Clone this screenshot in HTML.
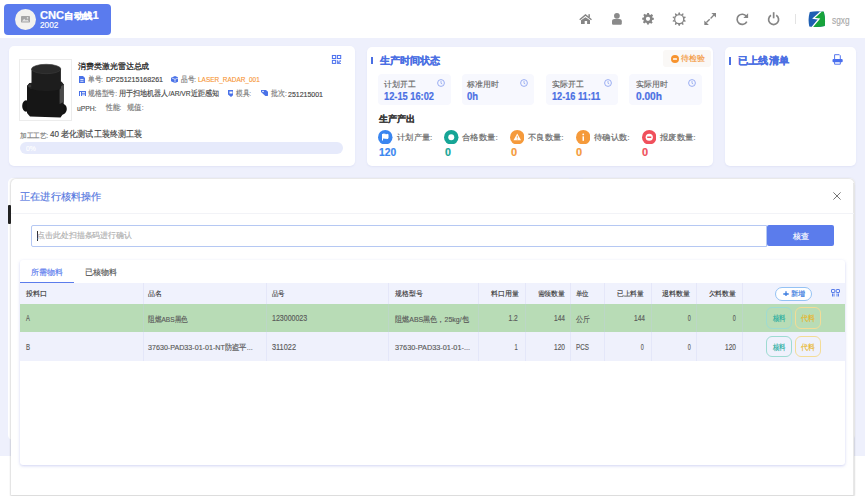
<!DOCTYPE html>
<html><head><meta charset="utf-8">
<style>
*{margin:0;padding:0;box-sizing:border-box}
html,body{width:865px;height:496px;overflow:hidden}
body{position:relative;background:#eef0fc;font-family:"Liberation Sans",sans-serif;color:#333}
.abs{position:absolute}
.txt{white-space:nowrap;line-height:1;-webkit-text-stroke:0.15px currentColor}
</style></head><body>
<div class="abs" style="left:0.00px;top:0.00px;width:865.00px;height:38.00px;background:#fff;"></div>
<div class="abs" style="left:4.00px;top:4.00px;width:107.00px;height:31.00px;background:#5a7bee;border-radius:4px"></div>
<div class="abs" style="left:15.00px;top:9.00px;width:21.00px;height:21.00px;background:#f3f2ef;border-radius:50%"></div>
<svg class="abs" style="left:21.00px;top:16.30px" width="9" height="6.5" viewBox="0 0 10 7"><rect width="10" height="7" rx="0.8" fill="#a5a5a5"/><path d="M1 6 L3.5 3 L5.5 5 L7 3.8 L9 6Z" fill="#e2e2e2"/><circle cx="7.3" cy="2" r="0.9" fill="#e2e2e2"/></svg>
<div id="t0" class="abs txt" style="top:9.84px;font-size:9.20px;color:#fff;font-weight:bold;-webkit-text-stroke:0.2px currentColor;left:40.00px;transform:scaleX(1.0529);transform-origin:left;"><span style="font-size:10.6px">CNC</span>自动线<span style="font-size:10.6px">1</span></div>
<div id="t1" class="abs txt" style="top:21.03px;font-size:9.00px;color:#fff;left:40.38px;transform:scaleX(0.9143);transform-origin:left;">2002</div>
<svg class="abs" style="left:575px;top:10px" width="25" height="18" viewBox="0 0 25 18"><path d="M4.7 9.7 L10.5 4.9 L16.5 9.7" fill="none" stroke="#858585" stroke-width="1.4"/><rect x="13.4" y="4.2" width="1.5" height="3" fill="#858585"/><path d="M6 10.2 L10.5 7.2 L15 10.2 V13.9 H12.1 V11 H9.7 V13.9 H6 Z" fill="#858585"/></svg>
<svg class="abs" style="left:605px;top:10px" width="25" height="18" viewBox="0 0 25 18"><circle cx="11.9" cy="5.8" r="2.9" fill="#8a8a8a"/><path d="M7 11.3 C7 9.8 8 9 9.4 9 H14.4 C15.8 9 16.8 9.8 16.8 11.3 V13.4 C16.8 14.3 16.2 14.8 15.3 14.8 H8.5 C7.6 14.8 7 14.3 7 13.4 Z" fill="#8a8a8a"/></svg>
<svg class="abs" style="left:642px;top:13.1px" width="12" height="11.6" viewBox="0 0 24 24"><path fill="#858585" d="M10 0h4l.6 3.2a9 9 0 0 1 2.4 1l2.7-1.9 2.8 2.8-1.9 2.7a9 9 0 0 1 1 2.4L24 10v4l-3.2.6a9 9 0 0 1-1 2.4l1.9 2.7-2.8 2.8-2.7-1.9a9 9 0 0 1-2.4 1L14 24h-4l-.6-3.2a9 9 0 0 1-2.4-1l-2.7 1.9-2.8-2.8 1.9-2.7a9 9 0 0 1-1-2.4L0 14v-4l3.2-.6a9 9 0 0 1 1-2.4L2.3 4.3l2.8-2.8L7.8 3.4a9 9 0 0 1 2.4-1zM12 7.6a4.4 4.4 0 1 0 0 8.8 4.4 4.4 0 0 0 0-8.8z"/></svg>
<svg class="abs" style="left:665px;top:8px" width="25" height="22" viewBox="0 0 25 22"><circle cx="14.2" cy="11.1" r="4.55" fill="none" stroke="#858585" stroke-width="1.3"/><path d="M15.45 6.20 L14.55 4.20 L13.85 4.20 L12.95 6.20Z M18.09 7.87 L18.54 5.72 L17.97 5.31 L16.07 6.40Z M19.25 10.77 L20.87 9.30 L20.65 8.63 L18.47 8.40Z M18.47 13.80 L20.65 13.57 L20.87 12.90 L19.25 11.43Z M16.07 15.80 L17.97 16.89 L18.54 16.48 L18.09 14.33Z M12.95 16.00 L13.85 18.00 L14.55 18.00 L15.45 16.00Z M10.31 14.33 L9.86 16.48 L10.43 16.89 L12.33 15.80Z M9.15 11.43 L7.53 12.90 L7.75 13.57 L9.93 13.80Z M9.93 8.40 L7.75 8.63 L7.53 9.30 L9.15 10.77Z M12.33 6.40 L10.43 5.31 L9.86 5.72 L10.31 7.87Z" fill="#858585"/></svg>
<svg class="abs" style="left:700px;top:8px" width="20" height="22" viewBox="0 0 20 22"><g fill="#858585"><path d="M16 5 V9.6 L11.4 5 Z"/><path d="M4.3 17 V12.4 L8.9 17 Z"/></g><g stroke="#858585" stroke-width="1.35"><path d="M13.9 7.1 L10.6 10.4"/><path d="M9.7 11.3 L6.4 14.6"/></g></svg>
<svg class="abs" style="left:730px;top:8px" width="22" height="22" viewBox="0 0 22 22"><path d="M16.4 8.4 A5.1 5.1 0 1 0 16.8 13.6" fill="none" stroke="#858585" stroke-width="1.65"/><path d="M18.1 5.3 V10 H13.4 Z" fill="#858585"/></svg>
<svg class="abs" style="left:762px;top:8px" width="22" height="22" viewBox="0 0 22 22"><path d="M9 7.3 A5 5 0 1 0 14.2 7.3" fill="none" stroke="#858585" stroke-width="1.7"/><rect x="10.8" y="4.2" width="1.7" height="6.1" fill="#858585"/></svg>
<div class="abs" style="left:795.30px;top:13.70px;width:1.00px;height:10.30px;background:#e3e3e3;"></div>
<svg class="abs" style="left:808.20px;top:10.90px" width="17.4" height="16.3" viewBox="0 17.4 16.3"><defs><clipPath id="lg"><path d="M1.8 0.9 Q8.7 -0.3 15.8 0.7 Q17.7 8 16.7 15 Q8.7 16.6 1.3 15.4 Q-0.4 8 1.8 0.9Z"/></clipPath></defs><g clip-path="url(#lg)"><rect width="17.4" height="16.3" fill="#1e5fb3"/><path d="M13.6 0 H18 V17 H3.6 L10.9 8.1 L5.8 7.3 Z" fill="#17a33b"/><path d="M13.8 -0.2 L5.6 7.3 L11 8 L3.6 16.8" fill="none" stroke="#fff" stroke-width="1.3" stroke-linejoin="miter"/></g></svg>
<div id="t2" class="abs txt" style="top:15.56px;font-size:10.00px;color:#a8a8a8;left:832.24px;transform:scaleX(0.8282);transform-origin:left;">sgxg</div>
<div class="abs" style="left:9.00px;top:46.00px;width:346.00px;height:120.00px;background:#fff;border-radius:5px;box-shadow:0 1px 2px rgba(110,120,200,.10)"></div>
<div class="abs" style="left:367.00px;top:47.00px;width:345.60px;height:119.00px;background:#fff;border-radius:5px;box-shadow:0 1px 2px rgba(110,120,200,.10)"></div>
<div class="abs" style="left:725.00px;top:47.00px;width:131.30px;height:119.00px;background:#fff;border-radius:5px;box-shadow:0 1px 2px rgba(110,120,200,.10)"></div>
<div class="abs" style="left:19.40px;top:58.50px;width:52.30px;height:62.90px;background:#fff;border:1px solid #ececec"></div>
<svg class="abs" style="left:20.50px;top:59.50px" width="51" height="61" viewBox="0 51 61"><ellipse cx="5" cy="46" rx="3.8" ry="5.8" fill="#111"/>
 <ellipse cx="40.8" cy="49" rx="5" ry="5.6" fill="#111"/>
 <path d="M6 26 L8.5 23 L40.5 21.8 L42.7 24.5 V53 L39.5 57.6 L9 56.5 L6 53 Z" fill="#161616"/>
 <path d="M38.6 22.5 L42.7 24.5 V42 L38.6 44 Z" fill="#4a4a4a"/>
 <path d="M6 26 L8.5 23 L40.5 21.8 L42.7 24.5 L38 28 L9.5 29 Z" fill="#252525"/>
 <ellipse cx="8.8" cy="26" rx="1.7" ry="1.2" fill="#3a3a3a"/><ellipse cx="33" cy="27.5" rx="1.7" ry="1.2" fill="#3a3a3a"/>
 <path d="M10.5 9 V28 C10.5 32 39.9 32 39.9 28 V9 Z" fill="#1d1d1d"/>
 <ellipse cx="25.2" cy="9" rx="14.7" ry="4.7" fill="#2a2a2a" stroke="#3c3c3c" stroke-width="0.6"/></svg>
<div id="t3" class="abs txt" style="top:63.18px;font-size:8.00px;color:#222;font-weight:500;-webkit-text-stroke:0.25px #222;left:77.76px;transform:scaleX(0.9921);transform-origin:left;">消费类激光雷达总成</div>
<svg class="abs" style="left:78.60px;top:76.30px" width="6.5" height="6.7" viewBox="0 6 7"><path d="M0 0H4L6 2V7H0Z" fill="#4a72e8"/><rect x="1.3" y="3.2" width="3.2" height="0.8" fill="#fff"/><rect x="1.3" y="4.8" width="3.2" height="0.8" fill="#fff"/></svg>
<div id="t4" class="abs txt" style="top:75.78px;font-size:7.50px;color:#777;left:87.81px;transform:scaleX(0.8260);transform-origin:left;">单号:</div>
<div id="t5" class="abs txt" style="top:76.38px;font-size:7.50px;color:#444;left:105.76px;transform:scaleX(0.9424);transform-origin:left;">DP251215168261</div>
<svg class="abs" style="left:171.20px;top:76.20px" width="7.3" height="7" viewBox="0 8 7"><path d="M4 0L8 1.7V5.3L4 7L0 5.3V1.7Z" fill="#4a72e8"/><path d="M0.8 2L4 3.3L7.2 2M4 3.3V6.5" stroke="#fff" stroke-width="0.7" fill="none"/></svg>
<div id="t6" class="abs txt" style="top:75.78px;font-size:7.50px;color:#777;left:181.00px;transform:scaleX(0.8277);transform-origin:left;">品号:</div>
<div id="t7" class="abs txt" style="top:76.38px;font-size:7.50px;color:#f7983a;left:198.05px;transform:scaleX(0.8607);transform-origin:left;">LASER_RADAR_001</div>
<svg class="abs" style="left:78.60px;top:90.70px" width="7" height="5.3" viewBox="0 7 6"><rect width="7" height="6" fill="#4a72e8"/><rect x="1" y="1" width="1" height="4" fill="#fff"/><rect x="3" y="1.2" width="3" height="0.8" fill="#fff"/><rect x="3" y="2.7" width="3" height="0.8" fill="#fff"/><rect x="3" y="4.2" width="3" height="0.8" fill="#fff"/></svg>
<div id="t8" class="abs txt" style="top:90.16px;font-size:7.50px;color:#777;left:87.81px;transform:scaleX(0.8508);transform-origin:left;">规格型号:</div>
<div id="t9" class="abs txt" style="top:90.16px;font-size:7.50px;color:#444;left:118.76px;transform:scaleX(0.8832);transform-origin:left;">用于扫地机器人/AR/VR近距感知</div>
<svg class="abs" style="left:227.80px;top:90.40px" width="5.7" height="6.3" viewBox="0 6 7"><path d="M0 0H6V4.5L3 7L0 4.5Z" fill="#4a72e8"/><rect x="1.5" y="1.5" width="3" height="2" fill="#fff"/></svg>
<div id="t10" class="abs txt" style="top:90.16px;font-size:7.50px;color:#777;left:236.43px;transform:scaleX(0.8342);transform-origin:left;">模具:</div>
<svg class="abs" style="left:260.90px;top:90.40px" width="7" height="5.6" viewBox="0 9 7"><path d="M0 0H5L9 3.5L5.5 7L0 2Z" fill="#4a72e8"/><circle cx="2" cy="1.5" r="0.8" fill="#fff"/></svg>
<div id="t11" class="abs txt" style="top:90.16px;font-size:7.50px;color:#777;left:270.76px;transform:scaleX(0.8720);transform-origin:left;">批次:</div>
<div id="t12" class="abs txt" style="top:90.76px;font-size:7.50px;color:#444;left:287.81px;transform:scaleX(0.9291);transform-origin:left;">251215001</div>
<div id="t13" class="abs txt" style="top:104.34px;font-size:7.50px;color:#777;left:105.85px;transform:scaleX(0.8386);transform-origin:left;">性能:</div>
<div id="t14" class="abs txt" style="top:104.94px;font-size:7.50px;color:#555;left:77.43px;transform:scaleX(0.8973);transform-origin:left;">uPPH:</div>
<div id="t15" class="abs txt" style="top:104.34px;font-size:7.50px;color:#777;left:127.43px;transform:scaleX(0.9194);transform-origin:left;">规值:</div>
<svg class="abs" style="left:325.00px;top:50.00px" width="25" height="20" viewBox="0 25 20"><g fill="none" stroke="#4f73ee" stroke-width="1.05"><rect x="7.4" y="5.5" width="3.3" height="3"/><rect x="12.4" y="5.5" width="3.3" height="3"/><rect x="7.4" y="10.4" width="3.3" height="3"/></g><path d="M12 10.2 H13.2 V11.4 H14.4 V10.2 H16 V11.8 H14.8 V13 H16 V14 H12Z" fill="#4f73ee" opacity="0.85"/></svg>
<div id="t16" class="abs txt" style="top:130.49px;font-size:9.00px;color:#444;left:50.00px;transform:scaleX(0.8973);transform-origin:left;">40 老化测试工装终测工装</div>
<div id="t17" class="abs txt" style="top:132.18px;font-size:7.00px;color:#777;left:19.62px;transform:scaleX(0.9414);transform-origin:left;">加工工艺:</div>
<div class="abs" style="left:19.90px;top:141.50px;width:323.60px;height:12.20px;background:#e6eafb;border-radius:6px"></div>
<div id="t18" class="abs txt" style="top:144.64px;font-size:7.50px;color:#fff;left:25.62px;transform:scaleX(0.9091);transform-origin:left;">0%</div>
<div class="abs" style="left:371.20px;top:56.60px;width:2.10px;height:7.40px;background:#4a6fe3;"></div>
<div id="t19" class="abs txt" style="top:55.74px;font-size:10.00px;color:#4a6fe3;font-weight:bold;-webkit-text-stroke:0.2px currentColor;left:380.00px;transform:scaleX(1.0072);transform-origin:left;">生产时间状态</div>
<div class="abs" style="left:663.00px;top:49.90px;width:48.20px;height:17.60px;background:#faf8f6;border-radius:3px"></div>
<svg class="abs" style="left:671.30px;top:55.40px" width="7.3" height="7.3" viewBox="0 8 8"><circle cx="4" cy="4" r="4" fill="#f7932e"/><rect x="2" y="3.2" width="4" height="1.6" rx="0.5" fill="#fff"/></svg>
<div id="t20" class="abs txt" style="top:54.76px;font-size:8.00px;color:#f4973a;left:680.57px;transform:scaleX(0.9931);transform-origin:left;">待检验</div>
<div class="abs" style="left:378.00px;top:74.00px;width:72.50px;height:30.80px;background:#f7f8fe;border-radius:4px"></div>
<div id="t21" class="abs txt" style="top:80.66px;font-size:8.00px;color:#666;left:384.00px;transform:scaleX(0.9812);transform-origin:left;">计划开工</div>
<svg class="abs" style="left:436.60px;top:78.70px" width="8" height="8" viewBox="0 8 8"><circle cx="4" cy="4" r="3.4" fill="none" stroke="#8ea5ef" stroke-width="0.9"/><path d="M4 2V4.3L5.3 5" fill="none" stroke="#8ea5ef" stroke-width="0.8"/></svg>
<div id="t22" class="abs txt" style="top:92.25px;font-size:10.30px;color:#4a6fe3;font-weight:bold;-webkit-text-stroke:0.2px currentColor;left:384.00px;transform:scaleX(0.9001);transform-origin:left;">12-15 16:02</div>
<div class="abs" style="left:461.50px;top:74.00px;width:72.50px;height:30.80px;background:#f7f8fe;border-radius:4px"></div>
<div id="t23" class="abs txt" style="top:80.66px;font-size:8.00px;color:#666;left:467.05px;transform:scaleX(0.9822);transform-origin:left;">标准用时</div>
<svg class="abs" style="left:520.10px;top:78.70px" width="8" height="8" viewBox="0 8 8"><circle cx="4" cy="4" r="3.4" fill="none" stroke="#8ea5ef" stroke-width="0.9"/><path d="M4 2V4.3L5.3 5" fill="none" stroke="#8ea5ef" stroke-width="0.8"/></svg>
<div id="t24" class="abs txt" style="top:92.25px;font-size:10.30px;color:#4a6fe3;font-weight:bold;-webkit-text-stroke:0.2px currentColor;left:467.05px;transform:scaleX(0.9167);transform-origin:left;">0h</div>
<div class="abs" style="left:545.80px;top:74.00px;width:72.50px;height:30.80px;background:#f7f8fe;border-radius:4px"></div>
<div id="t25" class="abs txt" style="top:80.66px;font-size:8.00px;color:#666;left:551.62px;transform:scaleX(0.9832);transform-origin:left;">实际开工</div>
<svg class="abs" style="left:604.40px;top:78.70px" width="8" height="8" viewBox="0 8 8"><circle cx="4" cy="4" r="3.4" fill="none" stroke="#8ea5ef" stroke-width="0.9"/><path d="M4 2V4.3L5.3 5" fill="none" stroke="#8ea5ef" stroke-width="0.8"/></svg>
<div id="t26" class="abs txt" style="top:92.25px;font-size:10.30px;color:#4a6fe3;font-weight:bold;-webkit-text-stroke:0.2px currentColor;left:551.62px;transform:scaleX(0.8900);transform-origin:left;">12-16 11:11</div>
<div class="abs" style="left:629.30px;top:74.00px;width:72.50px;height:30.80px;background:#f7f8fe;border-radius:4px"></div>
<div id="t27" class="abs txt" style="top:80.66px;font-size:8.00px;color:#666;left:635.57px;transform:scaleX(0.9812);transform-origin:left;">实际用时</div>
<svg class="abs" style="left:687.90px;top:78.70px" width="8" height="8" viewBox="0 8 8"><circle cx="4" cy="4" r="3.4" fill="none" stroke="#8ea5ef" stroke-width="0.9"/><path d="M4 2V4.3L5.3 5" fill="none" stroke="#8ea5ef" stroke-width="0.8"/></svg>
<div id="t28" class="abs txt" style="top:92.25px;font-size:10.30px;color:#4a6fe3;font-weight:bold;-webkit-text-stroke:0.2px currentColor;left:635.57px;transform:scaleX(0.9860);transform-origin:left;">0.00h</div>
<div id="t29" class="abs txt" style="top:114.96px;font-size:9.00px;color:#3a3a3a;font-weight:bold;-webkit-text-stroke:0.2px currentColor;left:379.47px;transform:scaleX(1.0098);transform-origin:left;">生产产出</div>
<svg class="abs" style="left:378.10px;top:129.60px" width="14.5" height="14.5" viewBox="0 14.5 14.5"><circle cx="7.25" cy="7.25" r="7.25" fill="#3a86f0"/><path d="M4.5 4 V10.5 M4.5 4.3 C6.5 3.3 8 5.3 10 4.3 V8.3 C8 9.3 6.5 7.3 4.5 8.3" stroke="#fff" stroke-width="1" fill="#fff"/></svg>
<div id="t30" class="abs txt" style="top:134.23px;font-size:8.00px;color:#666;left:396.57px;transform:scaleX(1.0323);transform-origin:left;">计划产量:</div>
<div id="t31" class="abs txt" style="top:147.14px;font-size:10.50px;color:#3a86f0;font-weight:bold;-webkit-text-stroke:0.2px currentColor;left:379.00px;transform:scaleX(0.9741);transform-origin:left;">120</div>
<svg class="abs" style="left:444.00px;top:129.60px" width="14.5" height="14.5" viewBox="0 14.5 14.5"><circle cx="7.25" cy="7.25" r="7.25" fill="#16a596"/><circle cx="7.25" cy="7.25" r="3" fill="#fff"/></svg>
<div id="t32" class="abs txt" style="top:134.23px;font-size:8.00px;color:#666;left:462.38px;transform:scaleX(1.0443);transform-origin:left;">合格数量:</div>
<div id="t33" class="abs txt" style="top:147.14px;font-size:10.50px;color:#16a596;font-weight:bold;-webkit-text-stroke:0.2px currentColor;left:444.81px;transform:scaleX(1.0175);transform-origin:left;">0</div>
<svg class="abs" style="left:509.90px;top:129.60px" width="14.5" height="14.5" viewBox="0 14.5 14.5"><circle cx="7.25" cy="7.25" r="7.25" fill="#f59a3b"/><path d="M7.25 3.5 L11 10.3 H3.5 Z" fill="#fff"/><rect x="6.85" y="5.8" width="0.8" height="2.5" fill="#f59a3b"/><rect x="6.85" y="8.8" width="0.8" height="0.8" fill="#f59a3b"/></svg>
<div id="t34" class="abs txt" style="top:134.23px;font-size:8.00px;color:#666;left:528.19px;transform:scaleX(1.0399);transform-origin:left;">不良数量:</div>
<div id="t35" class="abs txt" style="top:147.14px;font-size:10.50px;color:#f59a3b;font-weight:bold;-webkit-text-stroke:0.2px currentColor;left:510.62px;transform:scaleX(1.0466);transform-origin:left;">0</div>
<svg class="abs" style="left:575.80px;top:129.60px" width="14.5" height="14.5" viewBox="0 14.5 14.5"><circle cx="7.25" cy="7.25" r="7.25" fill="#f59a3b"/><rect x="6.5" y="6.3" width="1.5" height="4.5" fill="#fff"/><circle cx="7.25" cy="4.4" r="0.9" fill="#fff"/></svg>
<div id="t36" class="abs txt" style="top:134.23px;font-size:8.00px;color:#666;left:594.00px;transform:scaleX(1.0408);transform-origin:left;">待确认数:</div>
<div id="t37" class="abs txt" style="top:147.14px;font-size:10.50px;color:#f59a3b;font-weight:bold;-webkit-text-stroke:0.2px currentColor;left:576.43px;transform:scaleX(1.0466);transform-origin:left;">0</div>
<svg class="abs" style="left:641.70px;top:129.60px" width="14.5" height="14.5" viewBox="0 14.5 14.5"><circle cx="7.25" cy="7.25" r="7.25" fill="#f0505c"/><circle cx="7.25" cy="7.25" r="3.6" fill="#fff"/><rect x="5.2" y="6.5" width="4.1" height="1.5" fill="#f0505c"/></svg>
<div id="t38" class="abs txt" style="top:134.23px;font-size:8.00px;color:#666;left:659.81px;transform:scaleX(1.0399);transform-origin:left;">报废数量:</div>
<div id="t39" class="abs txt" style="top:147.14px;font-size:10.50px;color:#f0505c;font-weight:bold;-webkit-text-stroke:0.2px currentColor;left:642.24px;transform:scaleX(1.0466);transform-origin:left;">0</div>
<div class="abs" style="left:729.20px;top:56.80px;width:2.30px;height:7.80px;background:#4a6fe3;"></div>
<div id="t40" class="abs txt" style="top:55.93px;font-size:10.00px;color:#4a6fe3;font-weight:bold;-webkit-text-stroke:0.2px currentColor;left:738.00px;transform:scaleX(1.0180);transform-origin:left;">已上线清单</div>
<svg class="abs" style="left:825.00px;top:50.00px" width="25" height="20" viewBox="0 25 20"><path d="M9.6 9 V4.7 H14.3 L15.3 5.7 V9" fill="none" stroke="#5576ee" stroke-width="1"/><rect x="7.5" y="9" width="10.2" height="3.2" rx="1" fill="#4a6fee"/><path d="M9.6 12 V14.2 H15.3 V12" fill="none" stroke="#5576ee" stroke-width="1"/></svg>
<div class="abs" style="left:0.00px;top:455.50px;width:865.00px;height:40.50px;background:#fff;"></div>
<div class="abs" style="left:8.40px;top:177.60px;width:846.80px;height:262.40px;background:#fff;border-radius:5px"></div>
<div class="abs" style="left:10.80px;top:179.40px;width:843.00px;height:315.60px;background:#fff;border-radius:5px 5px 0 0;box-shadow:0 0 1.5px 0.3px rgba(0,0,0,.10), 0 1px 2px rgba(0,0,0,.08)"></div>
<div class="abs" style="left:853.00px;top:183.00px;width:1.20px;height:312.00px;background:rgba(0,0,0,0.09);"></div>
<div class="abs" style="left:568.70px;top:178.20px;width:14.10px;height:1.20px;background:#e4e6f2;"></div>
<div class="abs" style="left:8.20px;top:204.50px;width:2.70px;height:19.10px;background:#222;border-radius:1px"></div>
<div id="t41" class="abs txt" style="top:192.26px;font-size:10.20px;color:#5577e0;left:20.24px;transform:scaleX(1.0182);transform-origin:left;">正在进行核料操作</div>
<svg class="abs" style="left:833.00px;top:192.00px" width="8.3" height="8.2" viewBox="0 8 8"><path d="M0.4 0.4L7.6 7.6M7.6 0.4L0.4 7.6" stroke="#666" stroke-width="0.9"/></svg>
<div class="abs" style="left:10.50px;top:212.80px;width:843.50px;height:0.80px;background:#f2f3f7;"></div>
<div class="abs" style="left:30.80px;top:224.50px;width:735.80px;height:22.10px;background:#fff;border:1px solid #b5c8f3;border-radius:2px 0 0 2px"></div>
<div class="abs" style="left:37.00px;top:230.50px;width:0.80px;height:10.00px;background:#333;"></div>
<div id="t42" class="abs txt" style="top:231.71px;font-size:8.00px;color:#b0b0b0;left:37.43px;transform:scaleX(0.9908);transform-origin:left;">点击此处扫描条码进行确认</div>
<div class="abs" style="left:767.10px;top:224.60px;width:66.60px;height:21.40px;background:#5b7cec;border-radius:2px"></div>
<div id="t43" class="abs txt" style="top:233.09px;font-size:8.00px;color:#fff;left:792.57px;transform:scaleX(0.9987);transform-origin:left;">核查</div>
<div class="abs" style="left:19.80px;top:259.80px;width:825.40px;height:205.10px;background:#fff;border-radius:3px;box-shadow:0 1px 3px rgba(120,130,220,.35)"></div>
<div id="t44" class="abs txt" style="top:269.04px;font-size:8.00px;color:#5a7bee;left:31.00px;transform:scaleX(0.9937);transform-origin:left;">所需物料</div>
<div id="t45" class="abs txt" style="top:269.04px;font-size:8.00px;color:#555;left:85.00px;transform:scaleX(1.0050);transform-origin:left;">已核物料</div>
<div class="abs" style="left:19.90px;top:281.90px;width:54.10px;height:1.50px;background:#5b7cec;"></div>
<div class="abs" style="left:19.80px;top:283.40px;width:825.40px;height:20.60px;background:#f0f2fd;"></div>
<div class="abs" style="left:19.80px;top:304.00px;width:825.40px;height:28.00px;background:#b8dcb6;"></div>
<div class="abs" style="left:19.80px;top:332.00px;width:825.40px;height:29.00px;background:#eff1fc;"></div>
<div class="abs" style="left:142.50px;top:283.40px;width:0.80px;height:77.60px;background:rgba(200,205,240,0.28);"></div>
<div class="abs" style="left:265.60px;top:283.40px;width:0.80px;height:77.60px;background:rgba(200,205,240,0.28);"></div>
<div class="abs" style="left:388.30px;top:283.40px;width:0.80px;height:77.60px;background:rgba(200,205,240,0.28);"></div>
<div class="abs" style="left:478.40px;top:283.40px;width:0.80px;height:77.60px;background:rgba(200,205,240,0.28);"></div>
<div class="abs" style="left:524.50px;top:283.40px;width:0.80px;height:77.60px;background:rgba(200,205,240,0.28);"></div>
<div class="abs" style="left:569.80px;top:283.40px;width:0.80px;height:77.60px;background:rgba(200,205,240,0.28);"></div>
<div class="abs" style="left:604.40px;top:283.40px;width:0.80px;height:77.60px;background:rgba(200,205,240,0.28);"></div>
<div class="abs" style="left:650.80px;top:283.40px;width:0.80px;height:77.60px;background:rgba(200,205,240,0.28);"></div>
<div class="abs" style="left:696.40px;top:283.40px;width:0.80px;height:77.60px;background:rgba(200,205,240,0.28);"></div>
<div class="abs" style="left:742.20px;top:283.40px;width:0.80px;height:77.60px;background:rgba(200,205,240,0.28);"></div>
<div id="t46" class="abs txt" style="top:290.36px;font-size:7.00px;color:#333;font-weight:500;-webkit-text-stroke:0.12px #333;left:25.81px;transform:scaleX(1.0133);transform-origin:left;">投料口</div>
<div id="t47" class="abs txt" style="top:290.36px;font-size:7.00px;color:#333;font-weight:500;-webkit-text-stroke:0.12px #333;left:148.43px;transform:scaleX(0.9877);transform-origin:left;">品名</div>
<div id="t48" class="abs txt" style="top:290.36px;font-size:7.00px;color:#333;font-weight:500;-webkit-text-stroke:0.12px #333;left:271.57px;transform:scaleX(0.9241);transform-origin:left;">品号</div>
<div id="t49" class="abs txt" style="top:290.36px;font-size:7.00px;color:#333;font-weight:500;-webkit-text-stroke:0.12px #333;left:394.62px;transform:scaleX(0.9830);transform-origin:left;">规格型号</div>
<div id="t50" class="abs txt" style="top:290.36px;font-size:7.00px;color:#333;font-weight:500;-webkit-text-stroke:0.12px #333;right:346.24px;transform:scaleX(0.9895);transform-origin:right;">料口用量</div>
<div id="t51" class="abs txt" style="top:290.36px;font-size:7.00px;color:#333;font-weight:500;-webkit-text-stroke:0.12px #333;right:300.24px;transform:scaleX(0.9817);transform-origin:right;">需领数量</div>
<div id="t52" class="abs txt" style="top:290.36px;font-size:7.00px;color:#333;font-weight:500;-webkit-text-stroke:0.12px #333;left:576.00px;transform:scaleX(0.9212);transform-origin:left;">单位</div>
<div id="t53" class="abs txt" style="top:290.36px;font-size:7.00px;color:#333;font-weight:500;-webkit-text-stroke:0.12px #333;right:220.95px;transform:scaleX(0.9643);transform-origin:right;">已上料量</div>
<div id="t54" class="abs txt" style="top:290.36px;font-size:7.00px;color:#333;font-weight:500;-webkit-text-stroke:0.12px #333;right:174.57px;transform:scaleX(1.0013);transform-origin:right;">退料数量</div>
<div id="t55" class="abs txt" style="top:290.36px;font-size:7.00px;color:#333;font-weight:500;-webkit-text-stroke:0.12px #333;right:128.62px;transform:scaleX(0.9762);transform-origin:right;">欠料数量</div>
<div class="abs" style="left:775.00px;top:286.50px;width:36.80px;height:14.30px;background:#fff;border:1px solid #94c2f4;border-radius:8px"></div>
<svg class="abs" style="left:783.00px;top:290.70px" width="5.6" height="5.6" viewBox="0 6 6"><path d="M3 0.3V5.7M0.3 3H5.7" stroke="#3a7ce0" stroke-width="1.3"/></svg>
<div id="t56" class="abs txt" style="top:290.16px;font-size:7.30px;color:#3a7ce0;left:791.05px;transform:scaleX(1.0115);transform-origin:left;">新增</div>
<svg class="abs" style="left:831.00px;top:288.80px" width="8.6" height="7.8" viewBox="0 9 8"><g fill="none" stroke="#4a72e8" stroke-width="0.9"><rect x="0.5" y="0.5" width="3.3" height="3" rx="0.4"/><rect x="5.2" y="0.5" width="3.3" height="3" rx="0.4"/><path d="M1.5 4.5V7.5M3 4.5V7.5M6 4.5V7.5M7.5 4.5V7.5"/></g></svg>
<div id="t57" class="abs txt" style="top:315.67px;font-size:7.80px;color:#5a5a5a;left:148.43px;transform:scaleX(0.8387);transform-origin:left;">阻燃ABS黑色</div>
<div id="t58" class="abs txt" style="top:314.36px;font-size:8.40px;color:#5a5a5a;left:26.05px;transform:scaleX(0.6898);transform-origin:left;">A</div>
<div id="t59" class="abs txt" style="top:314.36px;font-size:8.40px;color:#5a5a5a;left:271.57px;transform:scaleX(0.8394);transform-origin:left;">123000023</div>
<div id="t60" class="abs txt" style="top:315.67px;font-size:7.80px;color:#5a5a5a;left:394.62px;transform:scaleX(0.8916);transform-origin:left;">阻燃ABS黑色，25kg/包</div>
<div id="t61" class="abs txt" style="top:314.36px;font-size:8.40px;color:#5a5a5a;right:347.14px;transform:scaleX(0.7900);transform-origin:right;">1.2</div>
<div id="t62" class="abs txt" style="top:314.36px;font-size:8.40px;color:#5a5a5a;right:300.24px;transform:scaleX(0.7827);transform-origin:right;">144</div>
<div id="t63" class="abs txt" style="top:315.67px;font-size:7.80px;color:#5a5a5a;left:576.00px;transform:scaleX(0.8663);transform-origin:left;">公斤</div>
<div id="t64" class="abs txt" style="top:314.36px;font-size:8.40px;color:#5a5a5a;right:220.24px;transform:scaleX(0.7827);transform-origin:right;">144</div>
<div id="t65" class="abs txt" style="top:314.36px;font-size:8.40px;color:#5a5a5a;right:174.57px;transform:scaleX(0.6458);transform-origin:right;">0</div>
<div id="t66" class="abs txt" style="top:314.36px;font-size:8.40px;color:#5a5a5a;right:129.52px;transform:scaleX(0.6458);transform-origin:right;">0</div>
<div id="t67" class="abs txt" style="top:344.43px;font-size:7.80px;color:#5a5a5a;left:148.43px;transform:scaleX(0.9153);transform-origin:left;">37630-PAD33-01-01-NT防盗平...</div>
<div id="t68" class="abs txt" style="top:343.12px;font-size:8.40px;color:#5a5a5a;left:26.05px;transform:scaleX(0.7303);transform-origin:left;">B</div>
<div id="t69" class="abs txt" style="top:343.12px;font-size:8.40px;color:#5a5a5a;left:271.57px;transform:scaleX(0.8769);transform-origin:left;">311022</div>
<div id="t70" class="abs txt" style="top:344.43px;font-size:7.80px;color:#5a5a5a;left:394.62px;transform:scaleX(0.9367);transform-origin:left;">37630-PAD33-01-01-...</div>
<div id="t71" class="abs txt" style="top:343.12px;font-size:8.40px;color:#5a5a5a;right:347.14px;transform:scaleX(0.6902);transform-origin:right;">1</div>
<div id="t72" class="abs txt" style="top:343.12px;font-size:8.40px;color:#5a5a5a;right:300.24px;transform:scaleX(0.7827);transform-origin:right;">120</div>
<div id="t73" class="abs txt" style="top:343.12px;font-size:8.40px;color:#5a5a5a;left:576.00px;transform:scaleX(0.7504);transform-origin:left;">PCS</div>
<div id="t74" class="abs txt" style="top:343.12px;font-size:8.40px;color:#5a5a5a;right:221.14px;transform:scaleX(0.6458);transform-origin:right;">0</div>
<div id="t75" class="abs txt" style="top:343.12px;font-size:8.40px;color:#5a5a5a;right:174.57px;transform:scaleX(0.6458);transform-origin:right;">0</div>
<div id="t76" class="abs txt" style="top:343.12px;font-size:8.40px;color:#5a5a5a;right:128.62px;transform:scaleX(0.7827);transform-origin:right;">120</div>
<div class="abs" style="left:766.00px;top:307.30px;width:26.20px;height:21.30px;background:transparent;border:1px solid #9edbd2;border-radius:6px"></div>
<div id="t77" class="abs txt" style="top:314.97px;font-size:7.50px;color:#26ada0;left:772.57px;transform:scaleX(0.8015);transform-origin:left;">核料</div>
<div class="abs" style="left:795.00px;top:307.30px;width:26.00px;height:21.30px;background:transparent;border:1px solid #f3dc97;border-radius:6px"></div>
<div id="t78" class="abs txt" style="top:314.97px;font-size:7.50px;color:#e8b422;left:801.38px;transform:scaleX(0.8574);transform-origin:left;">代料</div>
<div class="abs" style="left:766.00px;top:336.20px;width:26.20px;height:21.30px;background:transparent;border:1px solid #9edbd2;border-radius:6px"></div>
<div id="t79" class="abs txt" style="top:343.77px;font-size:7.50px;color:#26ada0;left:772.57px;transform:scaleX(0.8015);transform-origin:left;">核料</div>
<div class="abs" style="left:795.00px;top:336.20px;width:26.00px;height:21.30px;background:transparent;border:1px solid #f3dc97;border-radius:6px"></div>
<div id="t80" class="abs txt" style="top:343.77px;font-size:7.50px;color:#e8b422;left:801.38px;transform:scaleX(0.8574);transform-origin:left;">代料</div>
</body></html>
